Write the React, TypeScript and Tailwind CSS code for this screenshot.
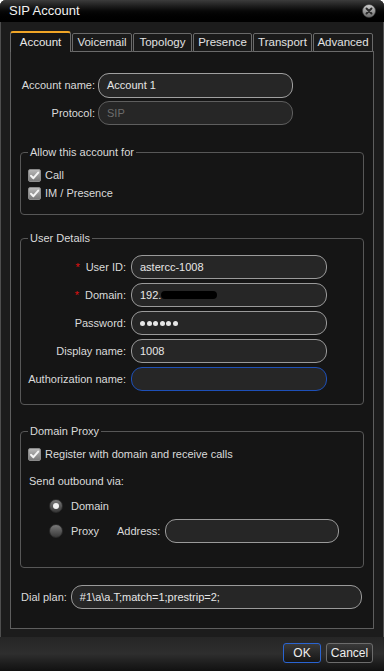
import React from "react";

function Input({ w, h = 24, children, className = "" }: { w: number; h?: number; children?: React.ReactNode; className?: string }) {
  return (
    <div
      className={`flex items-center rounded-[11px] border bg-[#262626] px-[8px] text-[11px] text-[#e6e6e6] ${className}`}
      style={{ width: w, height: h }}
    >
      {children}
    </div>
  );
}

function Check({ label }: { label: string }) {
  return (
    <div className="flex h-[18px] items-center gap-[4px]">
      <div className="flex h-[13px] w-[13px] items-center justify-center rounded-[2px] border border-[#8a8a8a] bg-linear-to-b from-[#b8b8b8] to-[#7a7a7a]">
        <svg width="11" height="11" viewBox="0 0 11 11">
          <path d="M2 5.8 L4.4 8.2 L9.2 2.6" fill="none" stroke="#f4f4f4" strokeWidth="2" strokeLinecap="round" strokeLinejoin="round" />
        </svg>
      </div>
      <span>{label}</span>
    </div>
  );
}

function Radio({ on }: { on?: boolean }) {
  return (
    <div className="flex h-[14px] w-[14px] items-center justify-center rounded-full border border-[#2a2a2a] bg-linear-to-b from-[#7a7a7a] to-[#3a3a3a]">
      {on && <div className="h-[6px] w-[6px] rounded-full bg-[#f2f2f2]" />}
    </div>
  );
}

const tabs = [
  { t: "Voicemail", w: 60 },
  { t: "Topology", w: 59 },
  { t: "Presence", w: 59 },
  { t: "Transport", w: 59 },
  { t: "Advanced", w: 60 },
];

export default function App() {
  return (
    <div className="flex h-[671px] w-[384px] flex-col overflow-hidden rounded-t-[6px] bg-[#1c1c1c] font-[Liberation_Sans,Arial,sans-serif] text-[11px] text-[#dadada] shadow-[inset_1px_0_0_#4e4e4e,inset_-1px_0_0_#4e4e4e]">
      {/* Title bar */}
      <div className="flex h-[22px] shrink-0 items-center justify-between bg-linear-to-b from-[#3c3c3c] via-[#080808] to-black pl-[9px] pr-[8px]">
        <span className="text-[13px] text-[#f2f2f2]">SIP Account</span>
        <svg width="14" height="14" viewBox="0 0 14 14">
          <defs>
            <linearGradient id="cg" x1="0" y1="0" x2="0" y2="1">
              <stop offset="0" stopColor="#d0d0d0" />
              <stop offset="1" stopColor="#6a6a6a" />
            </linearGradient>
          </defs>
          <circle cx="7" cy="7" r="6.5" fill="url(#cg)" stroke="#3a3a3a" strokeWidth="0.6" />
          <path d="M4.5 4.5 L9.5 9.5 M9.5 4.5 L4.5 9.5" stroke="#2a2a2a" strokeWidth="1.9" strokeLinecap="round" />
        </svg>
      </div>

      {/* Tabs */}
      <div className="relative z-10 -mb-px mt-[9px] flex h-[21px] items-end gap-[1px] pl-[10px] text-[11.5px]">
        <div className="flex h-[21px] w-[61px] items-center justify-center rounded-t-[3px] border-x border-t-2 border-x-[#6a6a6a] border-t-[#f0a526] bg-[#151515] text-[#e8e8e8]">
          Account
        </div>
        {tabs.map((x) => (
          <div
            key={x.t}
            className="flex h-[19px] items-center justify-center rounded-t-[2px] border border-[#6a6a6a] bg-[#1a1a1a] text-[#e2e2e2]"
            style={{ width: x.w }}
          >
            {x.t}
          </div>
        ))}
      </div>

      {/* Panel */}
      <div className="mx-[10px] flex flex-col border border-[#5e5e5e] bg-[#151515] px-[9px] pb-[19px] pt-[21px]">
        <div className="flex h-[25px] items-center gap-[3px]">
          <span className="w-[75px] whitespace-nowrap text-right">Account name:</span>
          <Input w={195} h={25} className="border-[#a0a0a0]">Account 1</Input>
        </div>
        <div className="mt-[3px] flex h-[24px] items-center gap-[3px]">
          <span className="w-[75px] text-right">Protocol:</span>
          <Input w={195} className="border-[#5e5e5e] text-[#6c6c6c]">
            <span className="text-[#6c6c6c]">SIP</span>
          </Input>
        </div>

        <fieldset className="mt-[21px] rounded-[4px] border border-[#575757] pb-[12px] pl-[7px] pr-[7px]">
          <legend className="px-[2px] leading-[13px]">Allow this account for</legend>
          <div className="mt-[7px]">
            <Check label="Call" />
            <Check label="IM / Presence" />
          </div>
        </fieldset>

        <fieldset className="mt-[17px] rounded-[4px] border border-[#575757] pb-[13px] pl-[7px] pr-[7px]">
          <legend className="px-[2px] leading-[13px]">User Details</legend>
          <div className="mt-[10px] flex flex-col gap-[4px]">
            <div className="flex h-[24px] items-center gap-[5px]">
              <span className="w-[98px] text-right">
                <span className="mr-[6px] text-[#e01010]">*</span>User ID:
              </span>
              <Input w={196} className="border-[#9a9a9a]">astercc-1008</Input>
            </div>
            <div className="flex h-[24px] items-center gap-[5px]">
              <span className="w-[98px] text-right">
                <span className="mr-[6px] text-[#e01010]">*</span>Domain:
              </span>
              <Input w={196} className="border-[#9a9a9a]">
                <span>192.</span>
                <span className="h-[8px] w-[56px] rounded-full bg-black" />
              </Input>
            </div>
            <div className="flex h-[24px] items-center gap-[5px]">
              <span className="w-[98px] text-right">Password:</span>
              <Input w={196} className="border-[#9a9a9a]">
                <span className="flex gap-[1.5px]">
                  {[0, 1, 2, 3, 4, 5].map((i) => (
                    <span key={i} className="h-[5px] w-[5px] rounded-full bg-[#e6e6e6]" />
                  ))}
                </span>
              </Input>
            </div>
            <div className="flex h-[24px] items-center gap-[5px]">
              <span className="w-[98px] text-right">Display name:</span>
              <Input w={196} className="border-[#9a9a9a]">1008</Input>
            </div>
            <div className="flex h-[24px] items-center gap-[5px]">
              <span className="w-[98px] whitespace-nowrap text-right">Authorization name:</span>
              <Input w={196} className="border-[#1e50b8]" />
            </div>
          </div>
        </fieldset>

        <fieldset className="mt-[20px] rounded-[4px] border border-[#575757] pb-[24px] pl-[7px] pr-[7px]">
          <legend className="px-[2px] leading-[13px]">Domain Proxy</legend>
          <div className="mt-[7px]">
            <Check label="Register with domain and receive calls" />
          </div>
          <div className="ml-[1px] mt-[9px] flex h-[18px] items-center">Send outbound via:</div>
          <div className="ml-[21px] mt-[7px] flex h-[18px] items-center gap-[8px]">
            <Radio on />
            <span>Domain</span>
          </div>
          <div className="ml-[21px] mt-[4px] flex h-[24px] items-center">
            <Radio />
            <span className="ml-[8px] w-[46px]">Proxy</span>
            <span>Address:</span>
            <Input w={174} className="ml-[5px] border-[#9a9a9a]" />
          </div>
        </fieldset>

        <div className="mt-[17px] flex h-[24px] items-center gap-[4px] pl-[1px]">
          <span>Dial plan:</span>
          <Input w={291} className="border-[#9a9a9a]">#1\a\a.T;match=1;prestrip=2;</Input>
        </div>
      </div>

      <div className="flex-1" />

      {/* Bottom bar */}
      <div className="flex h-[34px] shrink-0 items-start justify-end gap-[5px] bg-linear-to-b from-[#262626] via-[#2e2e2e] to-[#111111] pr-[11px] pt-[6px]">
        <button className="flex h-[20px] w-[38px] items-center justify-center rounded-[3px] border border-[#2a64d2] bg-linear-to-b from-[#3a3a3a] to-[#161616] text-[12px] text-[#eeeeee]">
          OK
        </button>
        <button className="flex h-[20px] w-[47px] items-center justify-center rounded-[3px] border border-[#6c6c6c] bg-linear-to-b from-[#3a3a3a] to-[#161616] text-[12px] text-[#eeeeee]">
          Cancel
        </button>
      </div>
    </div>
  );
}
